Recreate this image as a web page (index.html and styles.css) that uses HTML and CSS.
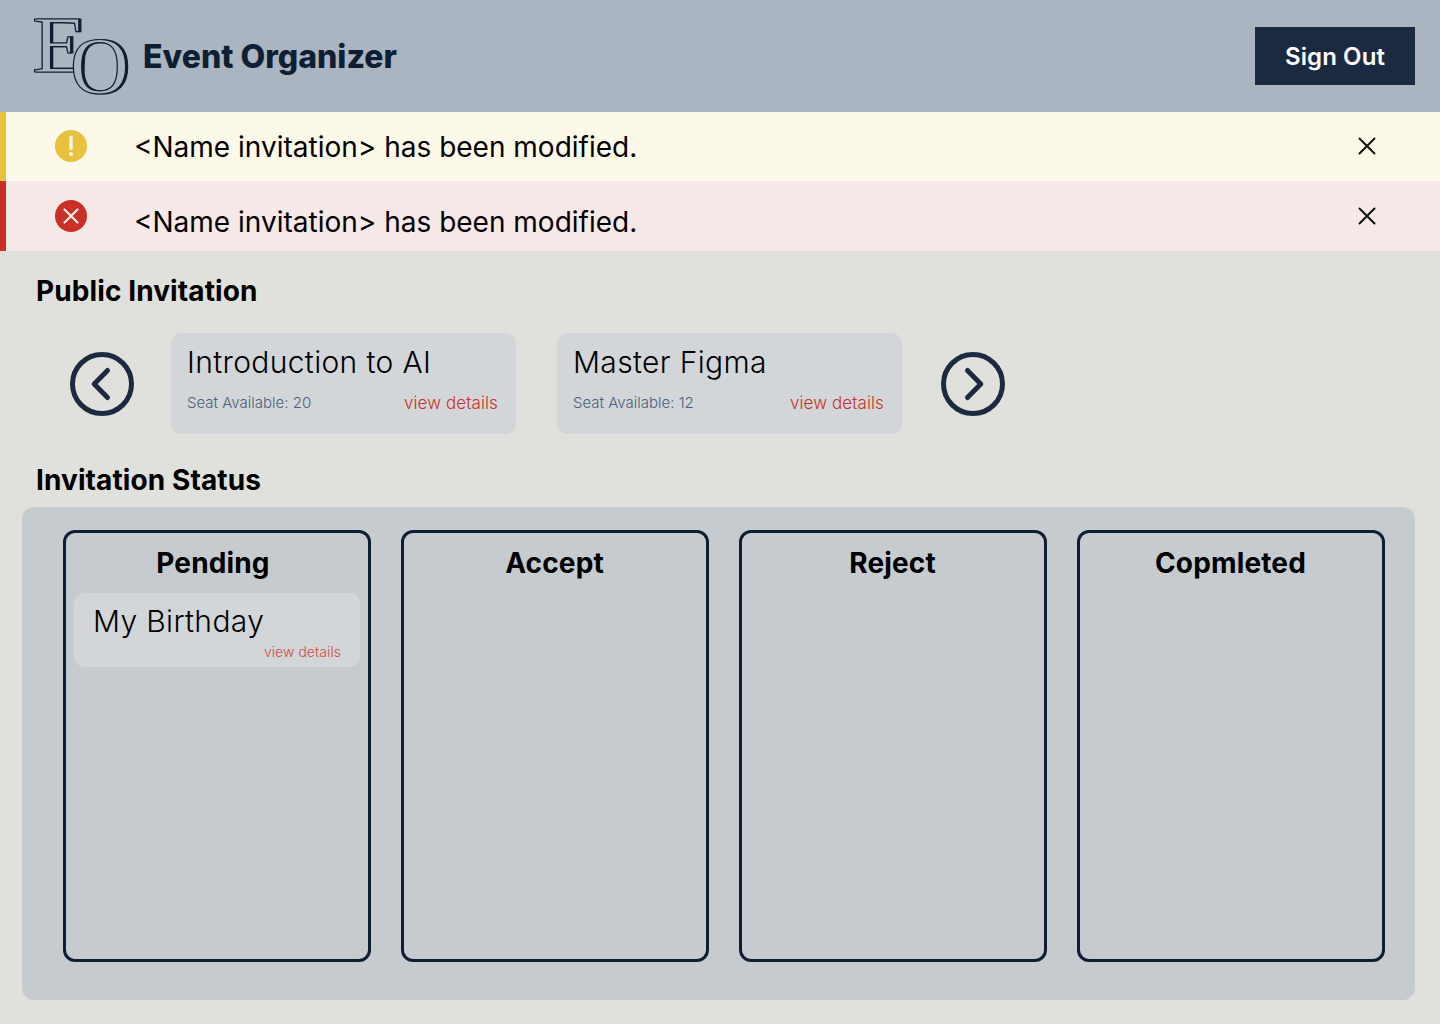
FILE: index.html
```html
<!DOCTYPE html>
<html lang="en">
<head>
    <meta charset="UTF-8">
    <meta name="viewport" content="width=device-width, initial-scale=1.0">
    <title>Event Organizer</title>
    <link rel="stylesheet" href="styles.css">
</head>
<body>
    <header class="topbar">
        <div class="brand">
            <svg class="brand-logo" width="100" height="112" viewBox="0 0 100 112" aria-hidden="true">
                <text class="logo-letter" x="-1" y="72" font-size="80" textLength="55" lengthAdjust="spacingAndGlyphs">E</text>
                <text class="logo-letter" x="37" y="93" font-size="80" textLength="59" lengthAdjust="spacingAndGlyphs">O</text>
            </svg>
            <span class="brand-name">Event Organizer</span>
        </div>
        <button type="button" class="sign-out">Sign Out</button>
    </header>

    <div class="alert alert-warning">
        <svg class="alert-icon" width="32" height="32" viewBox="0 0 32 32" aria-hidden="true">
            <circle cx="16" cy="16" r="16" fill="#e9c13f"/>
            <path d="M16 7.500v11" stroke="#fdfae9" stroke-width="3.400" stroke-linecap="round"/>
            <circle cx="16" cy="24" r="2" fill="#fdfae9"/>
        </svg>
        <p class="alert-text">&lt;Name invitation&gt; has been modified.</p>
        <svg class="alert-close" width="18" height="18" viewBox="0 0 18 18" aria-hidden="true">
            <path d="M1.500 1.500l15 15M16.500 1.500l-15 15" stroke="#111" stroke-width="2" stroke-linecap="round"/>
        </svg>
    </div>
    <div class="alert alert-error">
        <svg class="alert-icon" width="32" height="32" viewBox="0 0 32 32" aria-hidden="true">
            <circle cx="16" cy="16" r="16" fill="#cb3027"/>
            <path d="M9.500 9.500l13 13M22.500 9.500l-13 13" stroke="#fbeeec" stroke-width="2.200" stroke-linecap="round"/>
        </svg>
        <p class="alert-text">&lt;Name invitation&gt; has been modified.</p>
        <svg class="alert-close" width="18" height="18" viewBox="0 0 18 18" aria-hidden="true">
            <path d="M1.500 1.500l15 15M16.500 1.500l-15 15" stroke="#111" stroke-width="2" stroke-linecap="round"/>
        </svg>
    </div>

    <main class="content">
        <h2 class="section-title">Public Invitation</h2>
        <div class="carousel">
            <svg class="arrow arrow-prev" width="64" height="64" viewBox="0 0 64 64" aria-hidden="true">
                <circle cx="32" cy="32" r="29.500" fill="none" stroke="#1c2a41" stroke-width="5"/>
                <path d="M37.500 18.500L24.200 32 37.500 45.500" fill="none" stroke="#1c2a41" stroke-width="5" stroke-linecap="round" stroke-linejoin="round"/>
            </svg>
            <article class="event-card">
                <h3 class="event-title">Introduction to AI</h3>
                <div class="event-meta">
                    <span class="seats">Seat Available: 20</span>
                    <a class="details">view details</a>
                </div>
            </article>
            <article class="event-card">
                <h3 class="event-title">Master Figma</h3>
                <div class="event-meta">
                    <span class="seats">Seat Available: 12</span>
                    <a class="details">view details</a>
                </div>
            </article>
            <svg class="arrow arrow-next" width="64" height="64" viewBox="0 0 64 64" aria-hidden="true">
                <circle cx="32" cy="32" r="29.500" fill="none" stroke="#1c2a41" stroke-width="5"/>
                <path d="M26.500 18.500L39.800 32 26.500 45.500" fill="none" stroke="#1c2a41" stroke-width="5" stroke-linecap="round" stroke-linejoin="round"/>
            </svg>
        </div>

        <h2 class="section-title status-title">Invitation Status</h2>
        <section class="board">
            <div class="column">
                <h3 class="column-title column-title-pending">Pending</h3>
                <article class="mini-card">
                    <h4 class="mini-title">My Birthday</h4>
                    <a class="mini-details">view details</a>
                </article>
            </div>
            <div class="column">
                <h3 class="column-title">Accept</h3>
            </div>
            <div class="column">
                <h3 class="column-title">Reject</h3>
            </div>
            <div class="column">
                <h3 class="column-title">Copmleted</h3>
            </div>
        </section>
    </main>
</body>
</html>
```

FILE: styles.css
```css
:root {
    --navy: #0f1f33;
    --navy-soft: #1c2a41;
    --page-bg: #e0e1dc;
    --card-bg: #d2d6d8;
    --board-bg: #c5cbcf;
    --header-bg: #abb5c1;
    --red: #cb3027;
}

* {
    box-sizing: border-box;
}

body {
    margin: 0;
    min-height: 1024px;
    background-color: var(--page-bg);
    color: #000;
    font-family: Inter, "Liberation Sans", sans-serif;
}

h2, h3, h4, p {
    margin: 0;
}

.topbar {
    height: 112px;
    padding: 0 25px 0 33px;
    display: flex;
    justify-content: space-between;
    align-items: center;
    background-color: var(--header-bg);
}

.brand {
    display: flex;
    align-items: center;
    gap: 10px;
}

.brand-logo {
    display: block;
    overflow: visible;
}

.logo-letter {
    font-family: "Liberation Serif", serif;
    fill: var(--header-bg);
    stroke: var(--navy);
    stroke-width: 1.200;
    filter: drop-shadow(2.500px 0 0 var(--navy));
}

.brand-name {
    font-size: 32px;
    font-weight: 800;
    color: var(--navy);
}

.sign-out {
    width: 160px;
    height: 58px;
    border: none;
    background-color: var(--navy-soft);
    color: #fff;
    font-family: inherit;
    font-size: 24px;
    font-weight: 600;
    letter-spacing: 0.1px;
}

.alert {
    display: flex;
    align-items: flex-start;
    padding-left: 49px;
    padding-right: 64px;
    border-left: 6px solid;
}

.alert-warning {
    height: 69px;
    padding-top: 18px;
    background-color: #fcf9e8;
    border-left-color: #e9c13f;
}

.alert-error {
    height: 70px;
    padding-top: 19px;
    background-color: #f6e9e8;
    border-left-color: var(--red);
}

.alert-icon {
    flex: none;
}

.alert-text {
    flex: 1;
    margin-left: 47px;
    font-size: 28px;
    line-height: 34px;
}

.alert-error .alert-text {
    margin-top: 5px;
}

.alert-close {
    flex: none;
    margin-top: 7px;
}

.content {
    padding: 0 25px 24px 22px;
}

.section-title {
    padding-left: 14px;
    font-size: 28px;
    font-weight: 700;
    letter-spacing: 0.1px;
    line-height: 34px;
}

.content > .section-title:first-child {
    margin-top: 23px;
}

.carousel {
    display: flex;
    align-items: center;
    margin-top: 25px;
    padding-left: 48px;
}

.arrow {
    flex: none;
}

.arrow-prev {
    margin-right: 37px;
}

.arrow-next {
    margin-left: 39px;
}

.event-card {
    width: 345px;
    height: 101px;
    padding: 10px 18px 0 16px;
    background-color: var(--card-bg);
    border-radius: 10px;
}

.event-card + .event-card {
    margin-left: 41px;
}

.event-title {
    font-size: 30px;
    font-weight: 300;
    letter-spacing: 0.35px;
    line-height: 39px;
}

.event-meta {
    display: flex;
    justify-content: space-between;
    align-items: center;
    margin-top: 9px;
}

.seats {
    font-size: 15px;
    font-weight: 300;
    color: #4a5f80;
}

.details {
    margin-top: 2px;
    font-size: 17px;
    font-weight: 300;
    letter-spacing: 0.1px;
    color: var(--red);
}

.status-title {
    margin-top: 29px;
}

.board {
    display: grid;
    grid-template-columns: repeat(4, 308px);
    gap: 30px;
    height: 493px;
    margin-top: 10px;
    padding: 23px 30px 38px 41px;
    background-color: var(--board-bg);
    border-radius: 12px;
}

.column {
    padding: 0 8px;
    border: 3px solid var(--navy);
    border-radius: 12px;
}

.column-title {
    margin-top: 12px;
    padding-right: 1px;
    font-size: 28px;
    font-weight: 700;
    letter-spacing: 0.15px;
    line-height: 36px;
    text-align: center;
}

.column-title-pending {
    padding-right: 8px;
}

.mini-card {
    height: 74px;
    margin-top: 12px;
    padding: 9px 19px 0 19px;
    background-color: var(--card-bg);
    border-radius: 10px;
    display: flex;
    flex-direction: column;
}

.mini-title {
    font-size: 30px;
    font-weight: 300;
    letter-spacing: 0.35px;
    line-height: 38px;
}

.mini-details {
    align-self: flex-end;
    margin-top: 3px;
    font-size: 14px;
    font-weight: 300;
    letter-spacing: 0.05px;
    line-height: 17px;
    color: #cf4a44;
}
```
